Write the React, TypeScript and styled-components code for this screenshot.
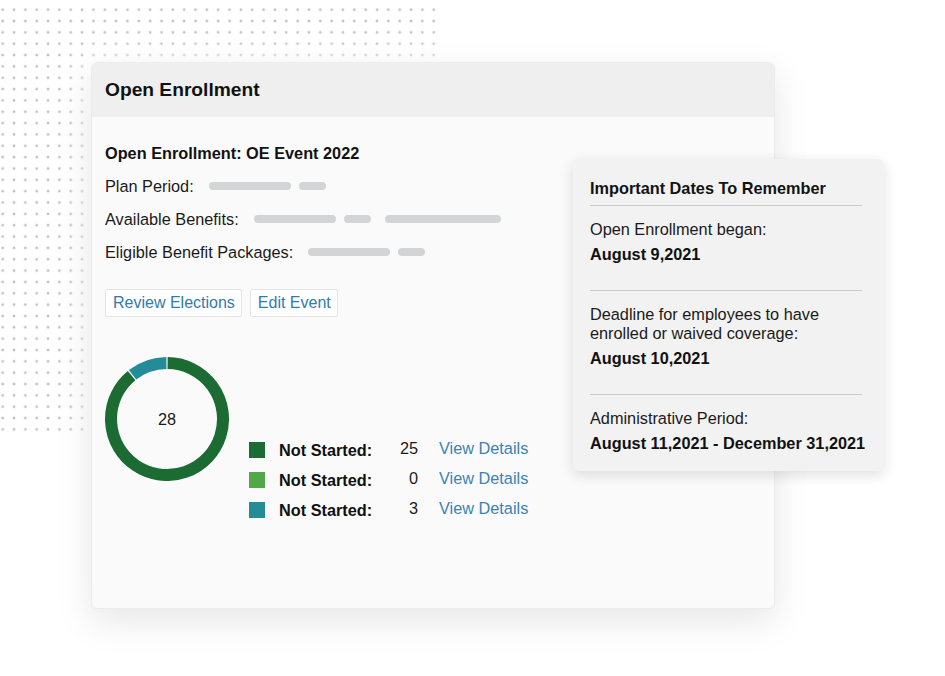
import styled, { createGlobalStyle } from "styled-components";

const GlobalStyle = createGlobalStyle`
  html, body {
    margin: 0;
    padding: 0;
    background: #ffffff;
  }
  body {
    font-family: "Liberation Sans", Arial, sans-serif;
    color: #121212;
  }
`;

const TEXT = "16.3px";

const benefits = [
  { label: "Plan Period:", bars: [{ w: 82 }, { w: 27, ml: 8 }] },
  { label: "Available Benefits:", bars: [{ w: 82 }, { w: 27, ml: 8 }, { w: 116, ml: 14 }] },
  { label: "Eligible Benefit Packages:", bars: [{ w: 82 }, { w: 27, ml: 8 }] },
];

const legend = [
  { color: "#1b6b33", label: "Not Started:", count: 25 },
  { color: "#52a846", label: "Not Started:", count: 0 },
  { color: "#248b99", label: "Not Started:", count: 3 },
];

const dates = [
  { label: ["Open Enrollment began:"], date: "August 9,2021" },
  { label: ["Deadline for employees to have", "enrolled or waived coverage:"], date: "August 10,2021" },
  { label: ["Administrative Period:"], date: "August 11,2021 - December 31,2021" },
];

// arc path for the donut, angles in degrees from 12 o'clock clockwise
function arc(cx: number, cy: number, r: number, a0: number, a1: number) {
  const rad = (a: number) => ((a - 90) * Math.PI) / 180;
  const x0 = cx + r * Math.cos(rad(a0));
  const y0 = cy + r * Math.sin(rad(a0));
  const x1 = cx + r * Math.cos(rad(a1));
  const y1 = cy + r * Math.sin(rad(a1));
  const large = a1 - a0 > 180 ? 1 : 0;
  return `M ${x0} ${y0} A ${r} ${r} 0 ${large} 1 ${x1} ${y1}`;
}

function Donut({ total }: { total: number }) {
  const segments = legend.filter((l) => l.count > 0);
  let start = 0;
  const gap = 1.2;
  return (
    <DonutBox>
      <svg width="124" height="124" viewBox="0 0 124 124">
        {segments.map((s, i) => {
          const sweep = (s.count / total) * 360;
          const d = arc(62, 62, 56, start + gap / 2, start + sweep - gap / 2);
          start += sweep;
          return <path key={i} d={d} fill="none" stroke={s.color} strokeWidth={12} />;
        })}
      </svg>
      <DonutLabel>{total}</DonutLabel>
    </DonutBox>
  );
}

export default function App() {
  const total = legend.reduce((a, b) => a + b.count, 0);
  return (
    <>
      <GlobalStyle />
      <Stage>
        <DotGrid />
        <Card>
          <CardHeader>Open Enrollment</CardHeader>
          <CardBody>
            <EventTitle>Open Enrollment: OE Event 2022</EventTitle>
            {benefits.map((b) => (
              <InfoRow key={b.label}>
                <span>{b.label}</span>
                <Bars>
                  {b.bars.map((bar, i) => (
                    <Bar key={i} $w={bar.w} $ml={bar.ml ?? 0} />
                  ))}
                </Bars>
              </InfoRow>
            ))}
            <Actions>
              <ActionButton>Review Elections</ActionButton>
              <ActionButton>Edit Event</ActionButton>
            </Actions>
            <ChartRow>
              <Donut total={total} />
              <Legend>
                {legend.map((l, i) => (
                  <LegendRow key={i}>
                    <Swatch $color={l.color} />
                    <LegendLabel>{l.label}</LegendLabel>
                    <LegendCount>{l.count}</LegendCount>
                    <LinkText>View Details</LinkText>
                  </LegendRow>
                ))}
              </Legend>
            </ChartRow>
          </CardBody>
        </Card>

        <DatesCard>
          <DatesTitle>Important Dates To Remember</DatesTitle>
          {dates.map((d) => (
            <DateSection key={d.date}>
              <DateLabel>
                {d.label.map((line, i) => (
                  <span key={i}>
                    {line}
                    {i < d.label.length - 1 && <br />}
                  </span>
                ))}
              </DateLabel>
              <DateValue>{d.date}</DateValue>
            </DateSection>
          ))}
        </DatesCard>
      </Stage>
    </>
  );
}

const Stage = styled.div`
  position: relative;
  width: 945px;
  height: 676px;
  padding: 62px 0 0 91px;
  box-sizing: border-box;
  overflow: hidden;
`;

const DotGrid = styled.div`
  position: absolute;
  left: -3px;
  top: 3.6px;
  width: 440px;
  height: 432px;
  background-image: radial-gradient(circle, #c0c0c0 1.15px, transparent 1.65px);
  background-size: 11.35px 11.35px;
  z-index: 0;
`;

const Card = styled.div`
  position: relative;
  z-index: 1;
  width: 684px;
  height: 547px;
  box-sizing: border-box;
  background: #fafafa;
  border: 1px solid #ececec;
  border-radius: 6px;
  box-shadow: 0 12px 36px rgba(0, 0, 0, 0.1), 0 0 24px 10px rgba(255, 255, 255, 0.7);
  overflow: hidden;
`;

const CardHeader = styled.div`
  height: 54px;
  display: flex;
  align-items: center;
  padding-left: 13px;
  background: #efefef;
  font-size: 19.2px;
  font-weight: 700;
  color: #111;
`;

const CardBody = styled.div`
  padding: 26px 13px 0;
`;

const EventTitle = styled.div`
  font-size: ${TEXT};
  line-height: 20px;
  font-weight: 700;
`;

const InfoRow = styled.div`
  display: flex;
  align-items: center;
  margin-top: 13px;
  font-size: ${TEXT};
  line-height: 20px;
  color: #1a1a1a;
`;

const Bars = styled.div`
  display: flex;
  align-items: center;
  margin-left: 15px;
`;

const Bar = styled.div<{ $w: number; $ml: number }>`
  width: ${(p) => p.$w}px;
  margin-left: ${(p) => p.$ml}px;
  height: 8px;
  border-radius: 4px;
  background: #d2d4d5;
`;

const Actions = styled.div`
  display: flex;
  gap: 8px;
  margin-top: 27px;
`;

const ActionButton = styled.div`
  height: 28px;
  box-sizing: border-box;
  display: inline-flex;
  align-items: center;
  padding: 0 6px 0 7px;
  background: #ffffff;
  border: 1px solid #e4e4e4;
  border-radius: 2px;
  font-size: 16px;
  color: #2f7bb0;
`;

const ChartRow = styled.div`
  display: flex;
  align-items: flex-start;
  gap: 20px;
  margin-top: 40px;
`;

const DonutBox = styled.div`
  position: relative;
  width: 124px;
  height: 124px;

  svg {
    display: block;
  }
`;

const DonutLabel = styled.div`
  position: absolute;
  inset: 0;
  display: flex;
  align-items: center;
  justify-content: center;
  font-size: ${TEXT};
  color: #1a1a1a;
`;

const Legend = styled.div`
  margin-top: 78px;
  display: grid;
  grid-template-columns: 30px 109px 30px auto;
  grid-auto-rows: 30px;
  align-items: center;
`;

const LegendRow = styled.div`
  display: contents;
`;

const Swatch = styled.div<{ $color: string }>`
  width: 16px;
  height: 16px;
  background: ${(p) => p.$color};
`;

const LegendLabel = styled.div`
  font-size: ${TEXT};
  font-weight: 700;
  color: #111;
`;

const LegendCount = styled.div`
  font-size: ${TEXT};
  text-align: right;
  color: #1a1a1a;
  margin-top: -3px;
`;

const LinkText = styled.div`
  font-size: ${TEXT};
  color: #3a82b6;
  padding-left: 21px;
  margin-top: -3px;
`;

const DatesCard = styled.div`
  position: absolute;
  z-index: 2;
  left: 573px;
  top: 159px;
  width: 311px;
  height: 312px;
  box-sizing: border-box;
  padding: 19px 20px 0 17px;
  background: #f2f2f2;
  border-radius: 6px;
  box-shadow: 0 4px 14px rgba(0, 0, 0, 0.13);
`;

const DatesTitle = styled.div`
  font-size: ${TEXT};
  line-height: 20px;
  font-weight: 700;
  padding-bottom: 7px;
  margin-right: 2px;
  border-bottom: 1px solid #c9c9c9;
`;

const DateSection = styled.div`
  padding: 14px 0 26px;
  margin-right: 2px;
  border-bottom: 1px solid #c9c9c9;

  &:last-child {
    border-bottom: none;
    margin-right: 0;
  }
`;

const DateLabel = styled.div`
  font-size: ${TEXT};
  line-height: 19px;
  color: #1a1a1a;
`;

const DateValue = styled.div`
  margin-top: 5px;
  font-size: ${TEXT};
  line-height: 20px;
  font-weight: 700;
  color: #111;
  white-space: nowrap;
`;
